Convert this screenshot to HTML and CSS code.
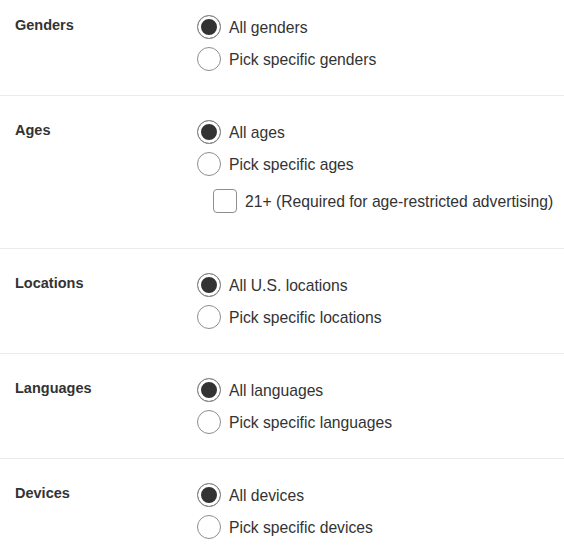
FILE: index.html
```html
<!DOCTYPE html>
<html>
<head>
<meta charset="utf-8">
<link rel="stylesheet" href="styles.css">
</head>
<body>
<div class="form">
  <div class="section first">
    <div class="label">Genders</div>
    <div class="options">
      <div class="opt"><span class="radio checked"></span><span class="text">All genders</span></div>
      <div class="opt"><span class="radio"></span><span class="text">Pick specific genders</span></div>
    </div>
  </div>
  <div class="section">
    <div class="label">Ages</div>
    <div class="options">
      <div class="opt"><span class="radio checked"></span><span class="text">All ages</span></div>
      <div class="opt"><span class="radio"></span><span class="text">Pick specific ages</span></div>
      <div class="opt check-row"><span class="checkbox"></span><span class="text">21+ (Required for age-restricted advertising)</span></div>
    </div>
  </div>
  <div class="section">
    <div class="label">Locations</div>
    <div class="options">
      <div class="opt"><span class="radio checked"></span><span class="text">All U.S. locations</span></div>
      <div class="opt"><span class="radio"></span><span class="text">Pick specific locations</span></div>
    </div>
  </div>
  <div class="section">
    <div class="label">Languages</div>
    <div class="options">
      <div class="opt"><span class="radio checked"></span><span class="text">All languages</span></div>
      <div class="opt"><span class="radio"></span><span class="text">Pick specific languages</span></div>
    </div>
  </div>
  <div class="section">
    <div class="label">Devices</div>
    <div class="options">
      <div class="opt"><span class="radio checked"></span><span class="text">All devices</span></div>
      <div class="opt"><span class="radio"></span><span class="text">Pick specific devices</span></div>
    </div>
  </div>
</div>
</body>
</html>
```

FILE: styles.css
```css
html, body {
  margin: 0;
  padding: 0;
  background: #fff;
}
body {
  font-family: "Liberation Sans", Arial, sans-serif;
  color: #333;
}
.form {
  width: 564px;
}
.section {
  display: flex;
  padding: 24px 0 24px 15px;
  border-top: 1px solid #ebebeb;
}
.section.first {
  padding-top: 15px;
  border-top: none;
}
.label {
  width: 182px;
  flex: none;
  font-size: 14.5px;
  font-weight: bold;
  line-height: 20px;
  color: #333;
}
.options {
  display: flex;
  flex-direction: column;
  gap: 8px;
}
.opt {
  display: flex;
  align-items: center;
  gap: 8px;
  height: 24px;
}
.text {
  font-size: 15.7px;
  line-height: 24px;
  padding-top: 1px;
  color: #333;
  white-space: nowrap;
}
.radio {
  width: 24px;
  height: 24px;
  box-sizing: border-box;
  border: 1px solid #8e8e8e;
  border-radius: 50%;
  background: #fff;
  flex: none;
}
.radio.checked {
  background: #333;
  box-shadow: inset 0 0 0 3px #fff;
}
.check-row {
  margin-top: 5px;
  margin-bottom: 11px;
  padding-left: 16px;
}
.checkbox {
  width: 24px;
  height: 24px;
  box-sizing: border-box;
  border: 1px solid #8e8e8e;
  border-radius: 4px;
  background: #fff;
  flex: none;
}
```
